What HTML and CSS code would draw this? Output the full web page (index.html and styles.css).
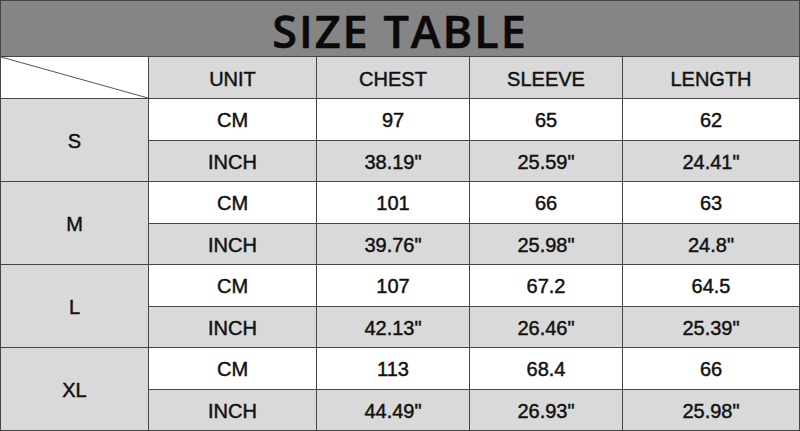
FILE: index.html
```html
<!DOCTYPE html>
<html>
<head>
<meta charset="utf-8">
<link rel="stylesheet" href="styles.css">
</head>
<body>
<div class="table">
  <div class="title">SIZE TABLE</div>
  <div class="corner"><svg viewBox="0 0 100 100" preserveAspectRatio="none"><line x1="0" y1="0" x2="100" y2="100" stroke="#555" stroke-width="1" vector-effect="non-scaling-stroke"/></svg></div>
  <div class="cell head">UNIT</div>
  <div class="cell head">CHEST</div>
  <div class="cell head">SLEEVE</div>
  <div class="cell head">LENGTH</div>

  <div class="cell size">S</div>
  <div class="cell">CM</div><div class="cell">97</div><div class="cell">65</div><div class="cell">62</div>
  <div class="cell alt">INCH</div><div class="cell alt">38.19"</div><div class="cell alt">25.59"</div><div class="cell alt">24.41"</div>

  <div class="cell size">M</div>
  <div class="cell">CM</div><div class="cell">101</div><div class="cell">66</div><div class="cell">63</div>
  <div class="cell alt">INCH</div><div class="cell alt">39.76"</div><div class="cell alt">25.98"</div><div class="cell alt">24.8"</div>

  <div class="cell size">L</div>
  <div class="cell">CM</div><div class="cell">107</div><div class="cell">67.2</div><div class="cell">64.5</div>
  <div class="cell alt">INCH</div><div class="cell alt">42.13"</div><div class="cell alt">26.46"</div><div class="cell alt">25.39"</div>

  <div class="cell size">XL</div>
  <div class="cell">CM</div><div class="cell">113</div><div class="cell">68.4</div><div class="cell">66</div>
  <div class="cell alt">INCH</div><div class="cell alt">44.49"</div><div class="cell alt">26.93"</div><div class="cell alt">25.98"</div>
</div>
</body>
</html>
```
FILE: styles.css
```css
* { box-sizing: border-box; }
html, body { margin: 0; padding: 0; background: #fff; }
.table {
  width: 800px;
  height: 431px;
  display: grid;
  grid-template-columns: 147px 167px 152px 152px 1fr;
  grid-template-rows: 55px 41px repeat(8, 1fr);
  gap: 1px;
  padding: 1px;
  background: #454545;
  font-family: "Liberation Sans", Arial, sans-serif;
  color: #111;
}
.title {
  grid-column: 1 / -1;
  background: #858585;
  display: flex;
  align-items: center;
  justify-content: center;
  font-family: "Open Sans", "Noto Sans", sans-serif;
  font-weight: 600;
  font-size: 45px;
  color: #0a0a0a;
  padding-top: 3px;
  letter-spacing: 2px;
  -webkit-text-stroke: 0.6px #0a0a0a;
}
.corner { background: #fff; }
.corner svg { display: block; width: 100%; height: 100%; }
.cell {
  background: #fff;
  display: flex;
  align-items: center;
  justify-content: center;
  font-size: 20px;
  padding-top: 3px;
  -webkit-text-stroke: 0.45px #111;
}
.head, .alt, .size { background: #d9d9d9; }
.size { grid-row: span 2; }
```
